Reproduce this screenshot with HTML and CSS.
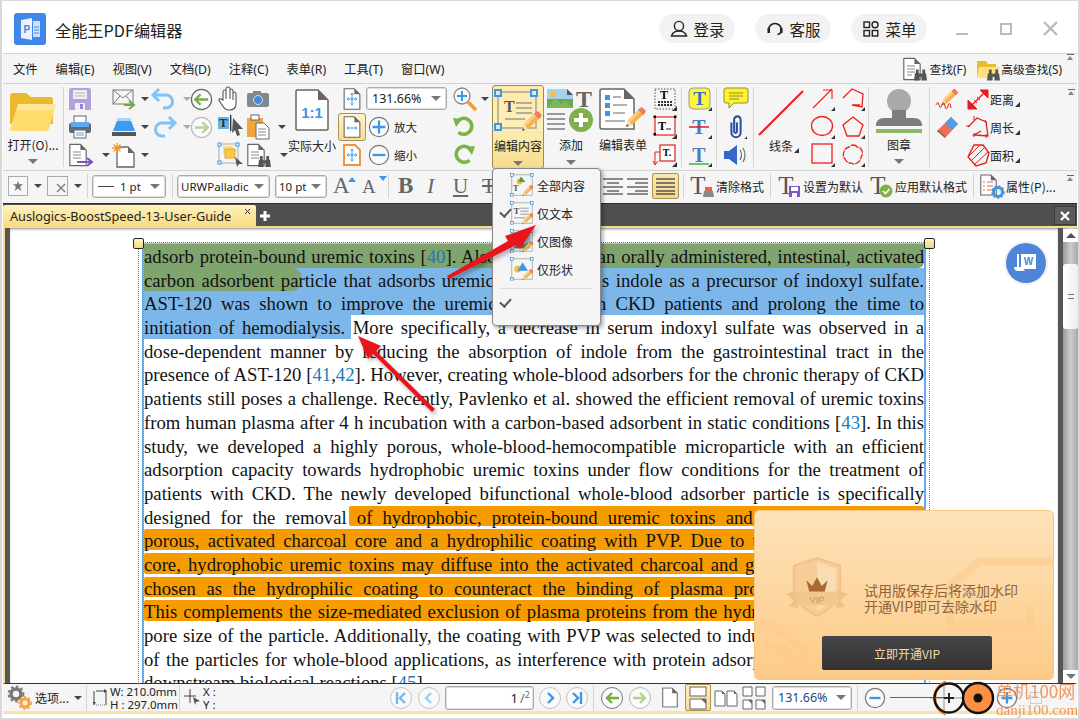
FILE: index.html
```html
<!DOCTYPE html>
<html lang="zh-CN">
<head>
<meta charset="utf-8">
<title>全能王PDF编辑器</title>
<link rel="stylesheet" href="styles.css">
</head>
<body>
<svg class="defs" width="0" height="0">
  <symbol id="pencil" viewBox="0 0 24 24">
    <path d="M3 22l2-7L17 3l5 5L9 20z" fill="#f6b04f"/>
    <path d="M5 15L17 3l2 2L7 17z" fill="#fbd07f"/>
    <path d="M15 5l2-2a2 2 0 0 1 3 0l2 2a2 2 0 0 1 0 3l-2 2z" fill="#ee7d5e"/>
    <path d="M3 22l2-7 4 5z" fill="#f8e3b5"/>
    <path d="M3 22l1-3 2 2z" fill="#555"/>
  </symbol>
  <symbol id="docf" viewBox="0 0 22 28">
    <path d="M1 1h13l7 7v19H1z" fill="#fff" stroke="#666" stroke-width="1.4" stroke-linejoin="round"/>
    <path d="M14 1l7 7h-7z" fill="#666"/>
  </symbol>
  <symbol id="binoc" viewBox="0 0 14 12">
    <path d="M1 4h5v8H0zM8 4h5l1 8H8zM2 0h3v4H2zM9 0h3v4H9zM6 5h2v3H6z" fill="#555"/>
  </symbol>
  <symbol id="handles" viewBox="0 0 40 40">
    <rect x="3" y="3" width="34" height="34" fill="none" stroke="#999" stroke-width="1.2"/>
    <g fill="#fff" stroke="#3d96e6" stroke-width="1.3">
      <rect x="1" y="1" width="4.5" height="4.5"/><rect x="34" y="1" width="4.5" height="4.5"/><rect x="1" y="34" width="4.5" height="4.5"/>
    </g>
  </symbol>
</svg>

<div class="app">
  <header class="title">
    <svg class="logo" width="32" height="32" viewBox="0 0 32 32">
      <rect width="32" height="32" rx="3" fill="#3f87ea"/>
      <path d="M7 7l11-2v22L7 25z" fill="#eaf2fd"/>
      <text x="9.500" y="20" font-family="Liberation Sans" font-weight="700" font-size="10" fill="#3f87ea">P</text>
      <path d="M19 8h7v16h-7z" fill="#cfe0f8"/>
      <path d="M20 14h5M20 17h5M20 20h5" stroke="#3f87ea"/>
    </svg>
    <span class="appname">全能王PDF编辑器</span>
    <div class="pills">
      <a class="pill"><svg width="20" height="20" viewBox="0 0 20 20"><circle cx="10" cy="7" r="4.600" fill="none" stroke="#222" stroke-width="1.400"/><path d="M2.500 17c1-3.500 4-5 7.500-5s6.500 1.500 7.500 5z" fill="none" stroke="#222" stroke-width="1.400"/></svg>登录</a>
      <a class="pill"><svg width="20" height="20" viewBox="0 0 20 20"><path d="M3.500 11a6.500 6.500 0 1 1 13 0c0 2.500-2 4-4 4.500" fill="none" stroke="#222" stroke-width="1.600"/><rect x="2.500" y="9" width="2.500" height="5" fill="#222"/><rect x="15" y="9" width="2.500" height="5" fill="#222"/></svg>客服</a>
      <a class="pill"><svg width="20" height="20" viewBox="0 0 20 20"><g fill="none" stroke="#222" stroke-width="1.400"><rect x="3" y="3" width="5.500" height="5.500"/><circle cx="14" cy="5.800" r="3"/><rect x="3" y="11.500" width="5.500" height="5.500"/><rect x="11.300" y="11.500" width="5.500" height="5.500"/></g></svg>菜单</a>
    </div>
    <div class="winbtns">
      <i class="w-min"></i><i class="w-max"></i>
      <svg width="15" height="15" viewBox="0 0 15 15"><path d="M1 1l13 13M14 1L1 14" stroke="#bbb" stroke-width="2.400"/></svg>
    </div>
  </header>

  <nav class="menubar">
    <a>文件</a><a>编辑(E)</a><a>视图(V)</a><a>文档(D)</a><a>注释(C)</a><a>表单(R)</a><a>工具(T)</a><a>窗口(W)</a>
    <div class="mb-right">
      <svg width="24" height="24" viewBox="0 0 24 24"><use href="#docf" x="0" y="0" width="18" height="24"/><path d="M4 9h8M4 12h8M4 15h8M4 18h5" stroke="#888"/><use href="#binoc" x="11" y="12" width="13" height="12"/></svg>
      <span class="mb-find">查找(F)</span>
      <svg class="mb-ico2" width="24" height="24" viewBox="0 0 24 24"><path d="M1 4h9l2 3h8v14H1z" fill="#e9bd2f"/><path d="M3 10h21l-4 11H1z" fill="#ffdf7e"/><use href="#binoc" x="11" y="12" width="13" height="12"/></svg>
      <span>高级查找(S)</span>
      <b class="coll"></b>
    </div>
  </nav>

  <section class="ribbon">
    <div class="g g-open">
      <svg width="48" height="38" viewBox="0 0 48 38"><path d="M1 3q0-3 3-3h13l5 4h20q2 0 2 3v24H1z" fill="#e9bb2c"/><path d="M9 11h38l-7 25q-1 2-3 2H3q-2 0-2-2z" fill="#ffdc6c"/><path d="M9 11h38l-2 6H8z" fill="#ffe89d"/></svg>
      <span class="lbl lbl-open">打开(O)...</span>
      <i class="car car-g"></i>
    </div>
    <i class="sep"></i>
    <div class="g3 g-file">
      <span class="c"><svg width="22" height="22" viewBox="0 0 22 22"><path d="M0 2q0-2 2-2h18q2 0 2 2v20H0z" fill="#b59fe0"/><rect x="4" y="2" width="14" height="9" fill="#eee"/><path d="M6 5h10M6 8h10" stroke="#bbb"/><rect x="6" y="15" width="10" height="7" fill="#eee"/><rect x="11" y="16" width="3" height="5" fill="#9a82cc"/></svg></span>
      <span class="c"><svg width="24" height="24" viewBox="0 0 24 24"><rect x="1" y="3" width="20" height="14" fill="#f7f7f7" stroke="#777"/><path d="M1 3l10 8 10-8M1 17l7-8M21 17l-7-8" fill="none" stroke="#777"/><path d="M12 18h8M17 14l5 4-5 4" fill="none" stroke="#6eaa3f" stroke-width="2"/></svg><i class="car"></i></span>
      <span class="c"><svg width="24" height="22" viewBox="0 0 24 22"><path d="M7 1L1 7l6 6M2 7h12a6 6 0 0 1 0 13h-3" fill="none" stroke="#83c2f3" stroke-width="3"/></svg><i class="car car-l"></i></span>
      <span class="c"><svg width="23" height="23" viewBox="0 0 24 24"><circle cx="12" cy="12" r="10.500" fill="#fafafa" stroke="#666" stroke-width="1.300"/><path d="M19 12H6M11 6.500L5.500 12l5.500 5.500" fill="none" stroke="#77ad40" stroke-width="2.500"/></svg></span>
      <span class="c"><svg width="22" height="22" viewBox="0 0 22 22"><rect x="5" y="0" width="12" height="7" fill="#fff" stroke="#666"/><rect x="0" y="7" width="22" height="10" rx="2" fill="#5f6a75"/><rect x="2" y="6" width="18" height="5" fill="#5fa8ea"/><rect x="5" y="14" width="12" height="8" fill="#fff" stroke="#666"/><path d="M7 17h8M7 19h8" stroke="#5fa8ea"/></svg></span>
      <span class="c"><svg width="24" height="20" viewBox="0 0 24 20"><path d="M6 1h12l5 13H1z" fill="#3e9bf0"/><path d="M6 1h12l1 3H5z" fill="#a9d5fa"/><rect x="0" y="15" width="24" height="4" fill="#555"/></svg><i class="car"></i></span>
      <span class="c"><svg width="24" height="22" viewBox="0 0 24 22"><path d="M17 1l6 6-6 6M22 7H10a6 6 0 0 0 0 13h3" fill="none" stroke="#83c2f3" stroke-width="3"/></svg><i class="car car-l"></i></span>
      <span class="c"><svg width="23" height="23" viewBox="0 0 24 24"><circle cx="12" cy="12" r="10.500" fill="#fafafa" stroke="#bbb" stroke-width="1.300"/><path d="M5 12h13M13 6.500l5.500 5.500-5.500 5.500" fill="none" stroke="#b5d196" stroke-width="2.500"/></svg></span>
      <span class="c"><svg width="24" height="24" viewBox="0 0 24 24"><use href="#docf" width="18" height="24"/><path d="M4 9h8M4 12h8M4 15h8" stroke="#888"/><path d="M8 19h14M18 15l5 4-5 4" fill="none" stroke="#7b51c5" stroke-width="2"/></svg><i class="car car-s"></i></span>
      <span class="c"><svg width="24" height="24" viewBox="0 0 24 24"><path d="M5 4h11l6 6v14H5z" fill="#fff" stroke="#666" stroke-width="1.300"/><path d="M16 4l6 6h-6z" fill="#666"/><path d="M5 0v10M0 5h10M1.500 1.500l7 7M8.500 1.500l-7 7" stroke="#f09a2c" stroke-width="1.300"/></svg><i class="car"></i></span>
    </div>
    <div class="g3 g-sel">
      <span class="c"><svg width="20" height="24" viewBox="0 0 20 24"><path d="M5 13V5q0-2 1.500-2T8 5v7V2q0-2 2-2t2 2v10V4q0-2 1.500-2T15 4v9V7q0-2 1.500-2T18 7v10q0 6-7 6-4 0-7-5L1 13q0-2 2-1z" fill="#fff" stroke="#555" stroke-width="1.100"/></svg></span>
      <span class="c"><svg width="22" height="16" viewBox="0 0 22 16"><rect y="2" width="22" height="14" rx="2" fill="#808890"/><rect x="6" y="0" width="8" height="3" fill="#808890"/><circle cx="11" cy="9" r="4.500" fill="#3f8fdc" stroke="#ddd"/></svg></span>
      <span class="c"><svg width="26" height="24" viewBox="0 0 26 24"><rect y="2" width="11" height="12" fill="#6cb2ea"/><text x="1" y="12" font-family="Liberation Serif" font-weight="700" font-size="13" fill="#333">T</text><path d="M12 0h1v16h-1" stroke="#666"/><path d="M15 3l10 11h-5l2 6-3 1-2-6-3 3z" fill="#555"/></svg></span>
      <span class="c"><svg width="22" height="24" viewBox="0 0 22 24"><rect y="3" width="16" height="19" fill="#f5a43c"/><rect x="4" y="0" width="8" height="5" fill="#fff" stroke="#666"/><path d="M9 8h8l5 5v11H9z" fill="#fff" stroke="#666"/><path d="M11 14h8M11 17h8M11 20h8" stroke="#888"/></svg><i class="car car-s"></i></span>
      <span class="c"><svg width="26" height="24" viewBox="0 0 26 24"><rect x="1" y="1" width="19" height="19" fill="none" stroke="#aaa"/><rect x="5" y="3" width="10" height="8" fill="#fbdf8a"/><rect x="7" y="6" width="10" height="9" fill="#f9c847" stroke="#e0a82a"/><g fill="#fff" stroke="#3d96e6"><rect width="3" height="3"/><rect x="18" width="3" height="3"/><rect y="18" width="3" height="3"/></g><path d="M17 14l8 7h-4l-2 3z" fill="#555"/></svg></span>
      <span class="c"><svg width="24" height="24" viewBox="0 0 24 24"><use href="#docf" width="18" height="24"/><path d="M4 9h8M4 12h8M4 15h8" stroke="#888"/><use href="#binoc" x="11" y="13" width="13" height="11"/></svg><i class="car car-s"></i></span>
    </div>
    <div class="g g-actual">
      <svg width="34" height="42" viewBox="0 0 34 42"><path d="M2 1h21l10 10v29q0 1-1 1H2q-1 0-1-1V2q0-1 1-1z" fill="#fff" stroke="#666" stroke-width="1.500"/><path d="M23 1l10 10H23z" fill="#666"/><text x="17" y="29" text-anchor="middle" font-family="Liberation Sans" font-weight="700" font-size="15" fill="#3d96e6">1:1</text></svg>
      <span class="lbl lbl-actual">实际大小</span>
    </div>
    <div class="g g-fit">
      <span class="fit"><svg width="18" height="22" viewBox="0 0 18 22"><use href="#docf" width="18" height="22"/><path d="M9 5v12M4 11h10M7.500 6.500L9 5l1.500 1.500M7.500 15.500L9 17l1.500-1.500M5.500 9.500L4 11l1.500 1.500M12.500 9.500L14 11l-1.500 1.500" fill="none" stroke="#3d96e6"/></svg></span>
      <span class="fit fit-on"><svg width="18" height="22" viewBox="0 0 18 22"><use href="#docf" width="18" height="22"/><path d="M4 12h10M5.500 10.500L4 12l1.500 1.500M12.500 10.500L14 12l-1.500 1.500" fill="none" stroke="#3d96e6"/></svg></span>
      <span class="fit"><svg width="18" height="22" viewBox="0 0 18 22"><path d="M1 1h11l5 5v15H1z" fill="#fff" stroke="#f0963a" stroke-width="2"/><path d="M9 5v12M4 11h10M7.500 6.500L9 5l1.500 1.500M7.500 15.500L9 17l1.500-1.500M5.500 9.500L4 11l1.500 1.500M12.500 9.500L14 11l-1.500 1.500" fill="none" stroke="#3d96e6"/></svg></span>
    </div>
    <div class="g g-zoom">
      <div class="combo c-zoom"><span>131.66%</span><i class="car car-g"></i></div>
      <div class="zrow"><svg width="22" height="22" viewBox="0 0 24 24"><circle cx="12" cy="12" r="10.500" fill="#fafafa" stroke="#777" stroke-width="1.300"/><path d="M12 5v14M5 12h14" stroke="#3d96e6" stroke-width="2.500"/></svg><span>放大</span></div>
      <div class="zrow"><svg width="22" height="22" viewBox="0 0 24 24"><circle cx="12" cy="12" r="10.500" fill="#fafafa" stroke="#777" stroke-width="1.300"/><path d="M5 12h14" stroke="#3d96e6" stroke-width="2.500"/></svg><span>缩小</span></div>
    </div>
    <div class="g g-rot">
      <span class="rot"><svg width="24" height="24" viewBox="0 0 24 24"><circle cx="9" cy="9" r="8" fill="#fafafa" stroke="#888" stroke-width="1.300"/><path d="M9 4v10M4 9h10" stroke="#3d96e6" stroke-width="2"/><path d="M15 15l8 8" stroke="#f09a3c" stroke-width="3.500"/></svg><i class="car car-s2"></i></span>
      <span class="rot"><svg width="22" height="20" viewBox="0 0 22 20"><path d="M5 4a8 8 0 1 1-1 9" fill="none" stroke="#7db246" stroke-width="3.500" transform="rotate(-20 11 10)"/><path d="M0 1l9 1-6 8z" fill="#7db246"/></svg></span>
      <span class="rot"><svg width="22" height="20" viewBox="0 0 22 20"><path d="M17 4a8 8 0 1 0 1 9" fill="none" stroke="#7db246" stroke-width="3.500" transform="rotate(20 11 10)"/><path d="M22 1l-9 1 6 8z" fill="#7db246"/></svg></span>
    </div>
    <div class="g bigbtn big-on">
      <span class="big-top"><svg width="48" height="44" viewBox="0 0 48 44"><rect x="4" y="3" width="38" height="36" fill="none" stroke="#999" stroke-width="1.300"/><g fill="#d8e9f8" stroke="#3d96e6" stroke-width="2"><rect x="1" y="1" width="6" height="6"/><rect x="37" y="1" width="6" height="6"/><rect x="1" y="35" width="6" height="6"/></g><text x="10" y="23" font-family="Liberation Serif" font-weight="700" font-size="16" fill="#555">T</text><path d="M22 14h16M22 19h16M22 24h16M11 30h20" stroke="#999" stroke-width="1.500"/><use href="#pencil" x="25" y="20" width="24" height="24"/></svg></span>
      <span class="lbl">编辑内容</span><i class="car car-g"></i>
    </div>
    <div class="g bigbtn big-add">
      <span class="big-top"><svg width="48" height="44" viewBox="0 0 48 44"><path d="M0 1h20l6 6v13H0z" fill="#6fa84c"/><path d="M0 1h20l6 6v4H0z" fill="#a5d1ef"/><path d="M0 20l8-10 6 6 4-3 8 7z" fill="#7db65a"/><circle cx="6" cy="6" r="3" fill="#f3c33f"/><path d="M20 1l6 6h-6z" fill="#555"/><text x="37" y="19" text-anchor="middle" font-family="Liberation Serif" font-weight="700" font-size="24" fill="#666">T</text><path d="M0 26h18M0 31h18M0 36h18M0 41h18" stroke="#999" stroke-width="1.800"/><circle cx="34" cy="32" r="12" fill="#7fb04c"/><path d="M34 25v14M27 32h14" stroke="#fff" stroke-width="4"/></svg></span>
      <span class="lbl">添加</span><i class="car car-g"></i>
    </div>
    <div class="g bigbtn big-form">
      <span class="big-top"><svg width="48" height="44" viewBox="0 0 48 44"><path d="M1 3q0-2 2-2h22l10 10v30H3q-2 0-2-2z" fill="#fff" stroke="#666" stroke-width="1.500"/><path d="M25 1l10 10H25z" fill="#666"/><g fill="#3d96e6"><rect x="6" y="7" width="5" height="5"/><rect x="6" y="15" width="5" height="5"/><rect x="6" y="23" width="5" height="5"/></g><path d="M14 9h8M14 17h14M14 25h12M6 33h20" stroke="#999" stroke-width="1.500"/><use href="#pencil" x="24" y="16" width="24" height="26"/></svg></span>
      <span class="lbl">编辑表单</span>
    </div>
    <div class="g g-txt">
      <svg class="cn" width="24" height="24" viewBox="0 0 24 24"><rect x="2" y="2" width="20" height="20" fill="none" stroke="#555" stroke-dasharray="1.500 1.500"/><text x="11" y="12" text-anchor="middle" font-family="Liberation Serif" font-weight="700" font-size="12">T</text><path d="M5 15h14M5 18h14" stroke="#333" stroke-width="2" stroke-dasharray="2 1"/><path d="M19 24l5-5v5z" fill="#333"/></svg>
      <svg class="cn" width="24" height="24" viewBox="0 0 24 24"><rect x="2" y="2" width="20" height="18" fill="#fff" stroke="#e02020" stroke-width="1.200"/><text x="9" y="15" text-anchor="middle" font-family="Liberation Serif" font-weight="700" font-size="12">T</text><path d="M13 14h5" stroke="#222"/><g fill="#000"><rect x="0.500" y="0.500" width="2.500" height="2.500"/><rect x="21" y="0.500" width="2.500" height="2.500"/><rect x="0.500" y="18" width="2.500" height="2.500"/></g><path d="M19 24l5-5v5z" fill="#333"/></svg>
      <svg class="cn" width="24" height="24" viewBox="0 0 24 24"><rect x="7" y="2" width="15" height="16" fill="#fff" stroke="#e02020" stroke-width="1.200"/><text x="14" y="13" text-anchor="middle" font-family="Liberation Serif" font-weight="700" font-size="10">T.</text><path d="M2 9v12M0 18l2 4 3-4M2 9h5" fill="none" stroke="#e02020"/><path d="M19 24l5-5v5z" fill="#333"/></svg>
    </div>
    <i class="sep"></i>
    <div class="g g-txt2">
      <svg class="cn" width="24" height="24" viewBox="0 0 24 24"><rect x="1" y="1" width="21" height="21" rx="4" fill="#fdf73c" stroke="#999"/><text x="11.500" y="18" text-anchor="middle" font-family="Liberation Serif" font-weight="700" font-size="19" fill="#3d6fc7">T</text><path d="M20 24l4-4v4z" fill="#333"/></svg>
      <svg class="cn" width="24" height="24" viewBox="0 0 24 24"><text x="11" y="19" text-anchor="middle" font-family="Liberation Serif" font-weight="700" font-size="20" fill="#4c7ac6">T</text><path d="M1 12h20" stroke="#e02020" stroke-width="1.500"/><path d="M20 24l4-4v4z" fill="#333"/></svg>
      <svg class="cn" width="24" height="24" viewBox="0 0 24 24"><text x="11" y="19" text-anchor="middle" font-family="Liberation Serif" font-weight="700" font-size="20" fill="#4c7ac6">T</text><path d="M1 21h20" stroke="#3fb33f" stroke-width="1.500"/><path d="M20 24l4-4v4z" fill="#333"/></svg>
    </div>
    <i class="sep"></i>
    <div class="g g-note">
      <svg class="cn" width="26" height="24" viewBox="0 0 26 24"><path d="M3 1h20q2 0 2 2v11q0 2-2 2H11l-5 5v-5H3q-2 0-2-2V3q0-2 2-2z" fill="#fdf335" stroke="#9a8a20"/><path d="M6 6h14M6 9h14M6 12h10" stroke="#8c8c20"/></svg>
      <svg class="cn" width="24" height="24" viewBox="0 0 24 26"><path d="M7 8v11a5 5 0 0 0 10 0V5a3.500 3.500 0 0 0-7 0v13a1.500 1.500 0 0 0 3 0V8" fill="none" stroke="#2c4f9a" stroke-width="2.200"/><path d="M21 26l3-3v3z" fill="#333"/></svg>
      <svg class="cn" width="26" height="24" viewBox="0 0 26 24"><path d="M1 8h5l8-6v20l-8-6H1z" fill="#3466cc"/><path d="M17 7q3 5 0 10M20 5q4 7 0 14" fill="none" stroke="#777" stroke-width="1.300"/></svg>
    </div>
    <i class="sep"></i>
    <div class="g g-line">
      <svg width="46" height="46" viewBox="0 0 46 46"><path d="M1 45L45 1" stroke="#ee1c1c" stroke-width="2"/></svg>
      <span class="lbl lbl-line">线条<b class="tri"></b></span>
    </div>
    <div class="g g-shapes">
      <svg width="24" height="24" viewBox="0 0 24 24"><path d="M2 21L21 2M12 3h9v9" fill="none" stroke="#ee2020" stroke-width="1.100"/><path d="M20 24l4-4v4z" fill="#333"/></svg>
      <svg width="24" height="24" viewBox="0 0 24 24"><path d="M2 11l9-9 11 5-1 13-10-2 8 0" fill="none" stroke="#ee2020" stroke-width="1.300"/><path d="M20 24l4-4v4z" fill="#333"/></svg>
      <svg width="24" height="24" viewBox="0 0 24 24"><ellipse cx="11" cy="11" rx="10.500" ry="9.500" fill="none" stroke="#ee2020" stroke-width="1.300"/><path d="M20 24l4-4v4z" fill="#333"/></svg>
      <svg width="24" height="24" viewBox="0 0 24 24"><path d="M12 2l10 8-4 11H6L2 10z" fill="none" stroke="#ee2020" stroke-width="1.300"/><path d="M20 24l4-4v4z" fill="#333"/></svg>
      <svg width="24" height="24" viewBox="0 0 24 24"><rect x="1" y="1" width="20" height="19" fill="none" stroke="#ee2020" stroke-width="1.300"/><path d="M20 24l4-4v4z" fill="#333"/></svg>
      <svg width="24" height="24" viewBox="0 0 24 24"><path d="M12 2q3 0 4 2 4 0 5 4 1 4-1 6 0 4-4 6-3 2-6 0-4 0-6-4-3-3-1-7 1-4 5-5 2-2 4-2z" fill="none" stroke="#ee2020" stroke-width="1.300" stroke-dasharray="6 1"/><path d="M20 24l4-4v4z" fill="#333"/></svg>
    </div>
    <i class="sep"></i>
    <div class="g g-stamp">
      <svg width="46" height="46" viewBox="0 0 46 46"><circle cx="23" cy="13" r="12" fill="#a9a9a9"/><path d="M16 22h14v8h-14z" fill="#7d7d7d"/><path d="M0 38q0-8 8-8h30q8 0 8 8z" fill="#7d7d7d"/><rect y="41" width="46" height="4" fill="#8fb865"/></svg>
      <span class="lbl lbl-stamp">图章</span><i class="car car-g"></i>
    </div>
    <i class="sep"></i>
    <div class="g g-meas">
      <span class="mrow"><svg width="24" height="24" viewBox="0 0 24 24"><use href="#pencil" x="4" y="0" width="20" height="20"/><path d="M1 18q2-5 3 0t3 0 3 1 3 0 3 2" fill="none" stroke="#e02020"/></svg><svg class="mi" width="24" height="24" viewBox="0 0 24 24"><path d="M3 21L21 3" stroke="#e02020" stroke-width="1.500"/><path d="M14 3h8v8zM2 13v9h9zM8 13l3 3M11 10l3 3" fill="#e02020" stroke="#e02020"/></svg><span class="ml">距离<b class="tri"></b></span></span>
      <span class="mrow"><svg width="24" height="24" viewBox="0 0 24 24"><path d="M2 16L16 2l7 7-13 14z" fill="#ee6e58"/><path d="M10 8l6-6 7 7-6 6z" fill="#4f9fe6"/><path d="M2 16l8 7v-2l-7-6z" fill="#a55"/></svg><svg class="mi" width="24" height="24" viewBox="0 0 24 24"><path d="M2 12l9-9 9 4 2 14-14-1 7-4" fill="none" stroke="#e02020" stroke-width="1.300"/><path d="M8 1v4M19 5l2 4M20 19v4M8 18v4M0 11h4" stroke="#e02020"/></svg><span class="ml">周长<b class="tri"></b></span></span>
      <span class="mrow"><i class="m-sp"></i><svg class="mi" width="24" height="24" viewBox="0 0 24 24"><path d="M8 2h9l6 8-3 10-10 3-8-9z" fill="none" stroke="#e02020" stroke-width="1.400"/><path d="M3 13L14 2M5 18L19 4M9 21L22 9" stroke="#e02020"/></svg><span class="ml">面积<b class="tri"></b></span></span>
    </div>
    <b class="coll coll-r"></b>
  </section>

  <section class="fmt">
    <span class="box m0"><svg width="10" height="10" viewBox="0 0 12 12"><path d="M6 0l1.500 4 4.500 0-3.500 3 1.500 5L6 9l-4 3 1.500-5L0 4h4.500z" fill="#777"/></svg></span>
    <i class="car m6"></i>
    <span class="box box2 m5"><svg width="10" height="10" viewBox="0 0 10 10"><path d="M1 1l8 8M9 1L1 9" stroke="#777" stroke-width="1.300"/></svg></span>
    <i class="car m6"></i>
    <i class="vs m5"></i>
    <div class="combo c-pt m4"><span class="dash"></span><span>1 pt</span><i class="car car-g"></i></div>
    <i class="vs m6"></i>
    <div class="combo c-font m4"><span>URWPalladic</span><i class="car car-g"></i></div>
    <div class="combo c-size m5"><span>10 pt</span><i class="car car-g"></i></div>
    <span class="glyph bigA m6">A<b class="up"></b></span>
    <span class="glyph smallA m9">A<b class="dn"></b></span>
    <i class="vs m4"></i>
    <span class="glyph fb m9">B</span>
    <span class="glyph fi m12">I</span>
    <span class="glyph fu m13">U</span>
    <span class="glyph fs m12">T</span>
    <svg class="m103" width="20" height="20" viewBox="0 0 20 20"><path d="M0 3h20M4 7h12M0 11h20M4 15h12M0 18h20" stroke="#666" stroke-width="1.500"/></svg>
    <svg class="m4" width="21" height="20" viewBox="0 0 21 20"><path d="M0 3h21M8 7h13M0 11h21M8 15h13M0 18h21" stroke="#666" stroke-width="1.500"/></svg>
    <span class="just m4"><svg width="19" height="20" viewBox="0 0 19 20"><path d="M0 3h19M0 7h19M0 11h19M0 15h19M0 18h19" stroke="#555" stroke-width="1.700"/></svg></span>
    <i class="vs m4"></i>
    <svg class="m6" width="23" height="24" viewBox="0 0 23 24"><text x="8" y="20" text-anchor="middle" font-family="Liberation Serif" font-size="25" fill="#555">T</text><rect x="15" y="13" width="7" height="4" fill="#dd6b4a"/><path d="M14 17h9l1 6h-11z" fill="#888"/></svg>
    <span class="ft m3">清除格式</span>
    <i class="vs m6"></i>
    <svg class="m7" width="23" height="24" viewBox="0 0 23 24"><text x="8" y="20" text-anchor="middle" font-family="Liberation Serif" font-size="25" fill="#555">T</text><path d="M11 12h11v11H11z" fill="#7b5ac5"/><rect x="13" y="13" width="7" height="4" fill="#fff"/><rect x="14" y="19" width="5" height="4" fill="#fff"/></svg>
    <span class="ft m2">设置为默认</span>
    <svg class="m7" width="23" height="24" viewBox="0 0 23 24"><text x="8" y="20" text-anchor="middle" font-family="Liberation Serif" font-size="25" fill="#555">T</text><circle cx="16" cy="17" r="6.500" fill="#7fb04c"/><path d="M13 17l2.500 2.500 4-4.500" fill="none" stroke="#fff" stroke-width="1.600"/></svg>
    <span class="ft m2">应用默认格式</span>
    <i class="vs m6"></i>
    <svg class="m6" width="24" height="24" viewBox="0 0 24 24"><use href="#docf" width="17" height="22"/><path d="M3 8h2M7 8h6M3 12h2M7 12h6M3 16h2M7 16h6" stroke="#e56a4a"/><circle cx="18" cy="18" r="4.500" fill="none" stroke="#3d96e6" stroke-width="3"/><circle cx="18" cy="18" r="6" fill="none" stroke="#3d96e6" stroke-width="1.500" stroke-dasharray="2 2"/></svg>
    <span class="ft m2">属性(P)...</span>
    <b class="coll coll-f"></b>
  </section>

  <div class="tabs">
    <div class="tab"><span>Auslogics-BoostSpeed-13-User-Guide</span><svg width="7" height="7" viewBox="0 0 7 7"><path d="M1 1l5 5M6 1L1 6" stroke="#333"/></svg></div>
    <svg class="tab-add" width="10" height="10" viewBox="0 0 10 10"><path d="M5 0v10M0 5h10" stroke="#fff" stroke-width="3"/></svg>
    <div class="tab-close"><svg width="10" height="10" viewBox="0 0 10 10"><path d="M1 1l8 8M9 1L1 9" stroke="#fff" stroke-width="2.400"/></svg></div>
  </div>

  <main class="doc">
    <div class="view">
      <div class="page">
        <b class="hd hd-l"></b><b class="hd hd-r"></b>
        <article class="text">
          <p class="ln"><i class="hl hl-g1"></i>adsorb protein-bound uremic toxins [<a>40</a>]. Also, AST-120 is an orally administered, intestinal, activated</p>
          <p class="ln"><i class="hl hl-b2"></i><i class="hl hl-g2"></i>carbon adsorbent particle that adsorbs uremic toxins such as indole as a precursor of indoxyl sulfate.</p>
          <p class="ln"><i class="hl hl-b"></i>AST-120 was shown to improve the uremic symptoms in CKD patients and prolong the time to</p>
          <p class="ln"><i class="hl hl-b4"></i>initiation of hemodialysis. More specifically, a decrease in serum indoxyl sulfate was observed in a</p>
          <p class="ln">dose-dependent manner by reducing the absorption of indole from the gastrointestinal tract in the</p>
          <p class="ln">presence of AST-120 [<a>41</a>,<a>42</a>]. However, creating whole-blood adsorbers for the chronic therapy of CKD</p>
          <p class="ln">patients still poses a challenge. Recently, Pavlenko et al. showed the efficient removal of uremic toxins</p>
          <p class="ln">from human plasma after 4 h incubation with a carbon-based adsorbent in static conditions [<a>43</a>]. In this</p>
          <p class="ln">study, we developed a highly porous, whole-blood-hemocompatible microparticle with an efficient</p>
          <p class="ln">adsorption capacity towards hydrophobic uremic toxins under flow conditions for the treatment of</p>
          <p class="ln">patients with CKD. The newly developed bifunctional whole-blood adsorber particle is specifically</p>
          <p class="ln"><i class="hl hl-o1"></i>designed for the removal of hydrophobic, protein-bound uremic toxins and consists of a highly</p>
          <p class="ln"><i class="hl hl-o"></i>porous, activated charcoal core and a hydrophilic coating with PVP. Due to the large pores of the</p>
          <p class="ln"><i class="hl hl-o"></i>core, hydrophobic uremic toxins may diffuse into the activated charcoal and get adsorbed. PVP was</p>
          <p class="ln"><i class="hl hl-o"></i>chosen as the hydrophilic coating to counteract the binding of plasma proteins to the particle.</p>
          <p class="ln"><i class="hl hl-o"></i>This complements the size-mediated exclusion of plasma proteins from the hydrophilic coating by the</p>
          <p class="ln">pore size of the particle. Additionally, the coating with PVP was selected to induce hemocompatibility</p>
          <p class="ln">of the particles for whole-blood applications, as interference with protein adsorption prevents adverse</p>
          <p class="ln ln-end">downstream biological reactions [<a>45</a>].</p>
        </article>
      </div>
    </div>
    <div class="sbar">
      <span class="sb-btn"><i class="car-up"></i></span>
      <span class="sb-thumb"><i></i></span>
      <span class="sb-btn sb-dn"><i class="car car-g"></i></span>
    </div>
  </main>

  <footer class="status">
    <svg class="m0" width="24" height="26" viewBox="0 0 24 26"><circle cx="8" cy="9" r="5" fill="none" stroke="#777" stroke-width="3.500"/><circle cx="8" cy="9" r="7.500" fill="none" stroke="#777" stroke-width="1.800" stroke-dasharray="2.500 2.500"/><circle cx="17" cy="18" r="4" fill="none" stroke="#f5a53c" stroke-width="3"/><circle cx="17" cy="18" r="6" fill="none" stroke="#f5a53c" stroke-width="1.800" stroke-dasharray="2.200 2.200"/></svg>
    <span class="st m3">选项...</span>
    <i class="car m6"></i>
    <i class="vs vs-st m4"></i>
    <svg class="m6" width="15" height="18" viewBox="0 0 15 18"><path d="M1 2v14M3 2h10v14" fill="none" stroke="#444"/><path d="M3 16h10" stroke="#777" stroke-dasharray="1 1"/><path d="M11 0l3 2-3 2zM0 13l1 3 2-3z" fill="#444"/></svg>
    <div class="dim m2"><span>W: 210.0mm</span><span>H : 297.0mm</span></div>
    <i class="vs vs-st m3"></i>
    <svg class="m4" width="17" height="17" viewBox="0 0 17 17"><path d="M0 7h12M6 0v14" stroke="#444"/><path d="M9 8l7 4-4 1-1 3z" fill="#555"/></svg>
    <div class="dim dim-xy m2"><span>X :</span><span>Y :</span></div>
    <button class="nav m147"><svg width="12" height="12" viewBox="0 0 12 12"><path d="M2 0v12" stroke="#73b8ee" stroke-width="2.400"/><path d="M10 1L5 6l5 5" fill="none" stroke="#73b8ee" stroke-width="2.400"/></svg></button>
    <button class="nav m6"><svg width="12" height="12" viewBox="0 0 12 12"><path d="M8 1L3 6l5 5" fill="none" stroke="#9ccdf3" stroke-width="2.400"/></svg></button>
    <div class="pageno m5"><span class="p1">1</span><span class="p2">/<sup>2</sup></span></div>
    <button class="nav m5"><svg width="12" height="12" viewBox="0 0 12 12"><path d="M4 1l5 5-5 5" fill="none" stroke="#3d96e6" stroke-width="2.400"/></svg></button>
    <button class="nav m5"><svg width="12" height="12" viewBox="0 0 12 12"><path d="M10 0v12" stroke="#3d96e6" stroke-width="2.400"/><path d="M2 1l5 5-5 5" fill="none" stroke="#3d96e6" stroke-width="2.400"/></svg></button>
    <i class="vs vs-st m5"></i>
    <button class="nav nav2 m7"><svg width="16" height="14" viewBox="0 0 16 14"><path d="M15 7H3M8 2L3 7l5 5" fill="none" stroke="#77ad40" stroke-width="2.400"/></svg></button>
    <button class="nav nav2 m6 off"><svg width="16" height="14" viewBox="0 0 16 14"><path d="M1 7h12M8 2l5 5-5 5" fill="none" stroke="#b5d196" stroke-width="2.400"/></svg></button>
    <svg class="m11" width="16" height="21" viewBox="0 0 22 28"><use href="#docf" width="22" height="28"/></svg>
    <span class="pgsel m7"><svg width="18" height="24" viewBox="0 0 18 24"><rect x="1" y="1" width="16" height="9" fill="#fff" stroke="#666"/><path d="M1 13h16v10H1z" fill="#fff" stroke="#666"/><path d="M12 13l5 5v-5z" fill="#666"/></svg></span>
    <svg class="m3" width="24" height="18" viewBox="0 0 24 18"><path d="M1 2h7l3 3v12H1zM13 2h7l3 3v12H13z" fill="#fff" stroke="#666"/><path d="M8 2l3 3H8zM20 2l3 3h-3z" fill="#666"/></svg>
    <svg class="m4" width="24" height="24" viewBox="0 0 24 24"><path d="M1 1h9v9H1zM14 1h9v9h-9zM1 14h9v9H1zM14 14h9v9h-9z" fill="#fff" stroke="#666"/><path d="M6 14l4 4v-4zM19 14l4 4v-4z" fill="#666"/></svg>
    <div class="combo c-sz2 m6"><span>131.66%</span><i class="car car-g"></i></div>
    <i class="vs vs-st m5"></i>
    <svg class="m6" width="22" height="22" viewBox="0 0 24 24"><circle cx="12" cy="12" r="10.500" fill="#fafafa" stroke="#777" stroke-width="1.300"/><path d="M6 12h12" stroke="#3d96e6" stroke-width="2.500"/></svg>
    <i class="slider"></i>
    <span class="zp"><svg width="22" height="22" viewBox="0 0 24 24"><circle cx="12" cy="12" r="10.500" fill="#fafafa" stroke="#777" stroke-width="1.300"/><path d="M12 6v12M6 12h12" stroke="#3d96e6" stroke-width="2.500"/></svg></span>
    <i class="zfit"></i>
  </footer>

  <div class="ctxmenu">
    <div class="mi-row"><i class="chk"></i><svg width="24" height="24" viewBox="0 0 40 40"><use href="#handles"/><circle cx="16" cy="14" r="5" fill="#f3c33f"/><path d="M18 6l8 9H14z" fill="#5b9a4c"/><text x="5" y="30" font-family="Liberation Serif" font-weight="700" font-size="14" fill="#555">T</text><use href="#pencil" x="18" y="18" width="22" height="22"/></svg><span>全部内容</span></div>
    <div class="mi-row"><i class="chk on"></i><svg width="24" height="24" viewBox="0 0 40 40"><use href="#handles"/><text x="6" y="22" font-family="Liberation Serif" font-weight="700" font-size="15" fill="#555">T</text><path d="M17 12h14M17 17h14M17 22h14M7 28h18" stroke="#999" stroke-width="1.600"/><use href="#pencil" x="18" y="18" width="22" height="22"/></svg><span>仅文本</span></div>
    <div class="mi-row"><i class="chk"></i><svg width="24" height="24" viewBox="0 0 40 40"><use href="#handles"/><path d="M6 8h28v24H6z" fill="#a5d1ef"/><path d="M6 32l10-14 8 8 5-4 5 10z" fill="#5f9a48"/><use href="#pencil" x="18" y="18" width="22" height="22"/></svg><span>仅图像</span></div>
    <div class="mi-row"><i class="chk"></i><svg width="24" height="24" viewBox="0 0 40 40"><use href="#handles"/><circle cx="13" cy="20" r="6" fill="#f3c33f"/><path d="M21 9l9 14H12z" fill="#3d96e6"/><use href="#pencil" x="18" y="18" width="22" height="22"/></svg><span>仅形状</span></div>
    <hr class="mi-sep">
    <div class="mi-row mi-last"><i class="chk on"></i></div>
  </div>

  <svg class="arrows" width="1080" height="720" viewBox="0 0 1080 720">
    <defs><filter id="sh"><feDropShadow dx="2" dy="3" stdDeviation="2" flood-color="#000" flood-opacity=".3"/></filter></defs>
    <g fill="#e8141c" filter="url(#sh)">
      <path d="M447 276L508 241 505 236 536 225 520 249 516 245 449 279Z"/>
      <path d="M432 412L373 354 368 359 358 336 381 346 376 351 435 409Z"/>
    </g>
  </svg>

  <div class="lw"><svg width="24" height="22" viewBox="0 0 24 22"><rect x="7" y="2" width="15" height="15" fill="#fff"/><path d="M3 2v13H0q0 4 4 4h7q-2-2-2-4H5V2z" fill="#fff"/><text x="14.500" y="13" text-anchor="middle" font-family="Liberation Sans" font-weight="700" font-size="10" fill="#4d86d8">W</text></svg></div>

  <aside class="vip">
    <svg class="vip-deco" width="300" height="170" viewBox="0 0 300 170"><path d="M0 115h20l28 24v31M10 135h14l10 8v27M195 115v-40l30-25h75M195 115h80V95" fill="none" stroke="#fdc98a" stroke-opacity=".5" stroke-width="8"/></svg>
    <div class="vip-main">
      <svg class="vip-badge" width="62" height="58" viewBox="0 0 64 60"><path d="M32 0l24 8v26q0 14-24 26Q8 48 8 34V8z" fill="#f6cd97" stroke="#f2c088" stroke-width="2"/><path d="M32 4l20 7v23q0 11-20 21z" fill="#f8dcb2"/><path d="M21 23l6 6 5-9 5 9 6-6-3 12H24z" fill="#a86a30"/><path d="M0 37l12-3v18L3 50l5-6zM64 37l-12-3v18l9-2-5-6z" fill="#efc08a"/><path d="M10 35h44v14H10z" fill="#f3c690"/><text x="32" y="47" text-anchor="middle" font-family="Liberation Sans" font-size="10" fill="#c99a68">VIP</text></svg>
      <p class="vip-text">试用版保存后将添加水印<br>开通VIP即可去除水印</p>
    </div>
    <button class="vip-btn">立即开通VIP</button>
  </aside>

  <svg class="cursorfx" width="66" height="40" viewBox="0 0 66 40">
    <path d="M16 4a17 17 0 0 0 0 32" fill="none" stroke="#f07820" stroke-width="3"/>
    <circle cx="19" cy="20" r="14.500" fill="none" stroke="#111" stroke-width="2.400"/>
    <path d="M19 15v10M14 20h10" stroke="#111" stroke-width="1.800"/>
    <path d="M0 20h36M14 6v28" stroke="#555" stroke-width=".6"/>
    <circle cx="48" cy="20" r="15" fill="#fb8f43" stroke="#111" stroke-width="2.400"/>
    <circle cx="48" cy="20" r="4.500" fill="#111"/>
  </svg>
  <div class="wm"><span class="wm1">单机100网</span><span class="wm2">danji100.com</span></div>
</div>
</body>
</html>
```
FILE: styles.css
```css
* { box-sizing: border-box; }
html, body { margin: 0; padding: 0; }
body { width: 1080px; height: 720px; overflow: hidden; background: #fff;
  font-family: "Noto Sans", "Noto Sans CJK SC", sans-serif; color: #222; }
.defs { position: absolute; }
svg { display: block; flex: none; overflow: visible; }
i, b { display: block; flex: none; }

.app { position: relative; width: 1080px; height: 720px; display: flex; flex-direction: column;
  border: 1px solid #d8d8d8; border-width: 1px 2px 2px; overflow: hidden; }

/* title */
.title { height: 52px; flex: none; display: flex; align-items: center; padding-left: 12px; background: #fff; }
.logo { margin-top: 3px; }
.appname { margin-left: 9px; font: 16.2px "Noto Sans CJK SC", sans-serif; margin-top: 5px; color: #222; width: 128px; white-space: nowrap; }
.pills { display: flex; gap: 20px; margin-left: 476px; margin-top: 3px; }
.pill { width: 76px; height: 29px; border-radius: 15px; background: #f2f2f2; display: flex; align-items: center;
  justify-content: center; gap: 4px; font: 15.5px "Noto Sans CJK SC", sans-serif; color: #222; }
.winbtns { display: flex; align-items: center; margin-left: 29px; margin-top: 3px; }
.w-min { width: 12px; height: 2px; background: #bbb; margin-top: 10px; }
.w-max { width: 12px; height: 12px; border: 2px solid #bbb; margin-left: 32px; }
.winbtns svg { margin-left: 31px; }

/* menu */
.menubar { height: 31px; flex: none; margin: 0 1px; display: flex; align-items: center; gap: 18px; padding-left: 10px;
  background: #f5f5f5; border-top: 1px solid #d4d4d4; border-bottom: 1px solid #d4d4d4; font-size: 12.3px; }
.menubar a { white-space: nowrap; }
.mb-right { margin-left: auto; display: flex; align-items: center; padding-right: 3px; font-size: 11.8px; }
.mb-find { margin-left: 2px; }
.mb-ico2 { margin: 0 1px 0 10px; }
.coll { width: 7px; height: 5px; margin-left: 5px; border-top: 1px solid #666; position: relative; }
.coll::after { content: ""; position: absolute; left: 0; top: 1px; border: 3.500px solid transparent; border-bottom: 4px solid #888; border-top: 0; }
.mb-right .coll { align-self: flex-start; margin-top: -3px; }

/* ribbon */
.ribbon { height: 87px; flex: none; margin: 0 1px; display: flex; background: #f5f5f5; border-bottom: 1px solid #d4d4d4; padding-top: 1px; font-size: 12px; position: relative; }
.sep { width: 1px; height: 80px; background: #d6d6d6; margin-top: 2px; }
.g { display: flex; flex-direction: column; align-items: center; flex: none; }
.lbl { font: 12px/16px "Noto Sans CJK SC", sans-serif; white-space: nowrap; color: #222; }
.car { width: 0; height: 0; border-style: solid; border-width: 4px 4px 0; border-color: #444 transparent transparent; }
.car-g { border-width: 5px 5px 0; border-top-color: #777; }
.car-l { border-top-color: #aaa; margin-left: 2px; }
.car-s { margin-left: 4px; }
.car-s2 { margin-left: 4px; }
.g-open { width: 60px; padding-top: 8px; }
.lbl-open { margin-top: 6px; margin-bottom: 6px; }
.g3 { display: grid; grid-template-rows: repeat(3, 28px); grid-auto-flow: row; flex: none; align-items: center; }
.c { display: flex; align-items: center; gap: 5px; }
.g-file { width: 151px; grid-template-columns: 43px 40px 38px 30px; padding-left: 5px; }
.g-sel { width: 72px; grid-template-columns: 29px 41px; padding-left: 3px; }
.g-actual { width: 50px; padding-top: 4px; }
.lbl-actual { margin-top: 7px; }
.g-fit { width: 29px; }
.fit { height: 28px; display: flex; align-items: center; justify-content: center; width: 28px; margin-left: 1px; }
.fit-on { background: linear-gradient(#fff3c4, #f8dd94); border: 1px solid #a8935a; border-radius: 3px; }
.g-zoom { width: 87px; align-items: flex-start; }
.combo { display: flex; align-items: center; justify-content: space-between; height: 23px; background: #fff; border: 1px solid #aaa; border-radius: 3px;
  box-shadow: 0 0 0 1px #ddd inset; padding: 0 5px; font-size: 12.5px; white-space: nowrap; flex: none; }
.c-zoom { width: 81px; margin-top: 2px; margin-bottom: 3px; }
.zrow { height: 28px; display: flex; align-items: center; gap: 4px; padding-left: 2px; font: 11.5px "Noto Sans CJK SC", sans-serif; }
.g-rot { width: 39px; align-items: flex-start; }
.rot { height: 28px; display: flex; align-items: center; }
.bigbtn { height: 84px; width: 52px; padding-top: 3px; }
.big-on { background: linear-gradient(#ffe9a8, #fdf0b6 45%, #f5dc8f); border: 1px solid #9c8c50; border-radius: 3px; width: 52px; }
.big-add { margin-left: 3px; width: 48px; }
.big-form { margin-left: 2px; width: 52px; }
.big-top { height: 44px; display: block; flex: none; }
.bigbtn .lbl { margin-top: 5px; margin-bottom: 7px; }
.big-on .big-top { border-bottom: 1px solid #f3e3ac; width: 50px; padding-left: 1px; }
.g-txt { width: 32px; }
.cn { margin: 2px 0 2px; }
.g-txt2 { width: 34px; padding-left: 2px; }
.g-note { width: 36px; padding-left: 2px; }
.g-line { width: 54px; padding-top: 5px; }
.lbl-line { margin-top: 2px; margin-left: 6px; display: flex; align-items: flex-end; }
.tri { width: 0; height: 0; border-style: solid; border-width: 0 0 5px 5px; border-color: transparent transparent #333 transparent; margin-left: 1px; margin-bottom: 1px; }
.g-shapes { width: 60px; display: grid; grid-template-columns: 30px 30px; grid-template-rows: repeat(3, 28px); align-items: center; justify-items: center; }
.g-stamp { width: 60px; padding-top: 3px; }
.lbl-stamp { margin-top: 3px; margin-bottom: 6px; }
.g-meas { width: 130px; align-items: flex-start; padding-left: 5px; }
.mrow { height: 28px; display: flex; align-items: center; }
.mi { margin-left: 7px; }
.ml { margin-left: 0; display: flex; align-items: flex-end; font: 12px "Noto Sans CJK SC", sans-serif; }
.m-sp { width: 24px; }
.coll-r { position: absolute; right: 2px; top: 5px; margin: 0; }
.coll-f { position: absolute; right: 3px; top: 4px; margin: 0; }

/* format row */
.fmt { height: 32px; flex: none; margin: 0 1px; display: flex; align-items: center; padding: 0 0 2px 5px; background: #f5f5f5; position: relative; }
.box { width: 20px; height: 20px; border: 1px solid #aaa; background: #f8f8f8; display: flex; align-items: center; justify-content: center; }
.box2 { width: 21px; background: transparent; justify-content: flex-end; align-items: flex-end; padding: 2px 1px; }
.vs { width: 1px; height: 24px; background: #d4d4d4; }
.m0 { margin-left: 0; } .m2 { margin-left: 2px; } .m3 { margin-left: 3px; } .m4 { margin-left: 4px; } .m5 { margin-left: 5px; } .m6 { margin-left: 6px; }
.m7 { margin-left: 7px; } .m9 { margin-left: 9px; } .m11 { margin-left: 11px; } .m12 { margin-left: 12px; } .m13 { margin-left: 13px; } .m103 { margin-left: 103px; } .m147 { margin-left: 147px; }
.c-pt { width: 74px; justify-content: flex-start; }
.dash { width: 16px; height: 1px; background: #444; margin-right: 6px; }
.c-pt .car { margin-left: auto; }
.c-pt, .c-font, .c-size { font-size: 11.5px; }
.c-font { width: 93px; padding-left: 3px; }
.c-size { width: 52px; padding-left: 3px; }
.glyph { font-family: "Liberation Serif", serif; color: #666; position: relative; display: block; line-height: 24px; flex: none; }
.bigA { width: 20px; font-size: 23px; }
.smallA { width: 22px; font-size: 19px; padding-top: 2px; }
.up, .dn { position: absolute; right: -3px; top: 3px; width: 0; height: 0; border-style: solid; border-color: transparent; }
.up { border-width: 0 4px 5px; border-bottom-color: #3d96e6; }
.dn { border-width: 5px 4px 0; border-top-color: #3d96e6; }
.fb { width: 17px; font-weight: 700; font-size: 23px; }
.fi { width: 13px; font-style: italic; font-size: 22px; }
.fu { width: 17px; font-size: 21px; text-decoration: underline; }
.fs { width: 18px; font-size: 22px; text-decoration: line-through; }
.just { width: 27px; height: 26px; background: linear-gradient(#fbe7a8, #f5d98a); border: 1px solid #a8935a; border-radius: 2px; display: flex; align-items: center; justify-content: center; }
.ft { font: 12px "Noto Sans CJK SC", sans-serif; white-space: nowrap; display: block; }

/* tabs */
.tabs { height: 25px; flex: none; margin: 0 1px; position: relative; display: flex; align-items: flex-end; background: #4f4f4f; border-top: 1px solid #2e2e2e; border-bottom: 2px solid #f7dc8c; }
.tab { width: 253px; height: 22px; margin-bottom: -1px; background: linear-gradient(#fff2be, #f8d97f); border-radius: 2px 2px 0 0; display: flex; align-items: center; padding-left: 7px; font-size: 12.7px; color: #222; white-space: nowrap; position: relative; }
.tab svg { position: absolute; right: 5px; top: 3px; }
.tab-add { margin: 0 0 5px 4px; }
.tab-close { position: absolute; right: 1px; top: 2px; width: 22px; height: 19px; border: 1px solid #3c3c3c; background: #5c5c5c; display: flex; align-items: center; justify-content: center; }

/* document */
.doc { height: 456px; flex: none; margin: 0 1px; display: flex; border-left: 2px solid #f7dc8c; border-right: 2px solid #f7dc8c; background: #555; border-bottom: 1px solid #333; }
.view { width: 1048px; margin-left: 5px; background: #fff; padding: 14px 0 0 128px; overflow: hidden; box-shadow: 0 2px 3px -1px #888 inset; flex: none; }
.page { position: relative; isolation: isolate; width: 792px; border: 1px dotted #777; border-bottom: 0; padding: 0 3px; height: 460px; }
.hd { position: absolute; top: -5px; width: 11px; height: 11px; background: linear-gradient(#fff4c4, #f6d67c); border: 1px solid #222; border-radius: 2px; }
.hd-l { left: -6px; } .hd-r { right: -6px; }
.text { border: 0 solid #6aa9ec; border-width: 1px 2px 0; border-top-color: #e0c050; width: 784px; font: 18.7px "Liberation Serif", serif; color: #111; }
.ln { margin: 0; position: relative; height: 23.7px; line-height: 25.7px; white-space: nowrap; text-align: justify; text-align-last: justify; }
.ln-end { text-align-last: left; }
.ln a { color: #1e78b8; position: relative; }
.hl { position: absolute; z-index: -1; top: 0; bottom: 0; left: 0; right: 0; }
.hl-g1 { background: #80a46d; border-radius: 0 0 6px 0; }
.hl-g2 { right: auto; width: 158px; background: #80a46d; border-radius: 0 10px 10px 0; }
.hl-b2, .hl-b { background: #7db7e9; }
.hl-b4 { background: #7db7e9; right: auto; width: 207px; }
.hl-o { background: #f69b00; top: 1px; bottom: 2px; border-radius: 2px; }
.hl-o1 { background: #f69b00; top: 1px; bottom: 2px; left: 205px; border-radius: 2px; }

/* scrollbar */
.sbar { width: 15px; margin-left: 5px; flex: none; display: flex; flex-direction: column; background: linear-gradient(90deg, #999, #ccc 50%, #aaa); padding-top: 1px; }
.sb-btn { height: 13px; background: #fff; display: flex; align-items: center; justify-content: center; flex: none; }
.car-up { width: 0; height: 0; border-style: solid; border-width: 0 5px 5px; border-color: transparent transparent #555; }
.sb-thumb { height: 65px; margin-top: 22px; background: linear-gradient(90deg, #fff, #eee); border-radius: 3px; display: flex; align-items: center; justify-content: center; flex: none; }
.sb-thumb i { width: 6px; height: 5px; border-top: 1px solid #777; border-bottom: 1px solid #777; position: relative; }
.sb-dn { margin-top: auto; }

/* status */
.status { height: 30px; flex: none; margin: 0 1px; display: flex; align-items: center; padding-left: 5px; background: #f5f5f5; border-bottom: 3px solid #fbe4a2; position: relative; }
.st { font: 12px "Noto Sans CJK SC", sans-serif; white-space: nowrap; display: block; width: 33px; }
.vs-st { height: 26px; }
.dim { display: flex; flex-direction: column; font-size: 11.4px; line-height: 13px; white-space: nowrap; width: 66px; }
.dim-xy { width: 40px; }
.nav { width: 22px; height: 22px; padding: 0; border-radius: 50%; border: 1px solid #c4c4c4; background: #fafafa; display: flex; align-items: center; justify-content: center; flex: none; }
.nav2 { border-color: #777; }
.nav2.off { border-color: #bbb; }
.pageno { width: 89px; height: 24px; border: 1px solid #aaa; border-radius: 3px; background: #fff; box-shadow: 0 0 0 1px #ddd inset; display: flex; align-items: center; justify-content: flex-end; padding-right: 3px; font-size: 13px; flex: none; }
.p2 { color: #666; font-size: 13px; margin-left: 2px; }
.p2 sup { font-size: 9px; }
.pgsel { width: 26px; height: 27px; background: linear-gradient(#fff1bd, #f7d98b); border: 1px solid #a8935a; border-radius: 2px; display: flex; align-items: center; justify-content: center; flex: none; }
.c-sz2 { width: 80px; height: 24px; font-size: 12.5px; color: #1c4a80; }
.slider { width: 58px; height: 1px; background: #666; margin-left: 4px; flex: none; }
.zp { margin-left: 48px; }
.zfit { width: 12px; height: 12px; margin-left: 12px; border: 1px solid #ccc; flex: none; }

/* overlays */
.ctxmenu { position: absolute; left: 490px; top: 167px; width: 109px; height: 158px; z-index: 5; padding: 2px 0 0; background: #f5f5f5; border: 1px solid #888; border-radius: 4px; box-shadow: 2px 2px 4px rgba(0,0,0,.35); font: 12px "Noto Sans CJK SC", sans-serif; }
.mi-row { height: 28px; display: flex; align-items: center; }
.mi-row svg { margin-left: 1px; }
.mi-row span { margin-left: 3px; }
.chk { width: 10px; height: 10px; margin-left: 6px; position: relative; flex: none; }
.chk.on::after { content: ""; position: absolute; left: 1px; top: 0; width: 9px; height: 5px; border-left: 2.500px solid #555; border-bottom: 2.500px solid #555; transform: rotate(-48deg); }
.mi-sep { border: 0; height: 1px; background: #ddd; margin: 5px 7px 0; }
.mi-last { height: 28px; }
.arrows { position: absolute; left: -2px; top: -1px; z-index: 6; pointer-events: none; }
.lw { position: absolute; left: 1004px; top: 242px; width: 40px; height: 40px; border-radius: 50%; background: #4d86d8; box-shadow: 0 0 0 2px #f2f2f2; display: flex; align-items: center; justify-content: center; z-index: 3; }
.vip { position: absolute; left: 752px; top: 509px; width: 300px; height: 170px; z-index: 4; background: linear-gradient(#fde2b8, #fdcb88); border: 1px solid #f9c784; border-radius: 5px; overflow: hidden; }
.vip-deco { position: absolute; left: 0; top: 0; }
.vip-main { position: relative; display: flex; align-items: flex-end; padding: 47px 0 0 31px; }
.vip-text { margin: 0 0 2px 16px; font: 14px/16px "Noto Sans CJK SC", sans-serif; color: #8f6240; white-space: nowrap; }
.vip-btn { position: relative; display: block; width: 170px; height: 34px; margin: 20px 0 0 67px; border: 0; border-radius: 2px; background: linear-gradient(#464646, #333); color: #f7d9a8; font: 12px "Noto Sans CJK SC", sans-serif; padding: 0; }
.cursorfx { position: absolute; left: 928px; top: 677px; z-index: 7; }
.wm { position: absolute; right: 0; top: 679px; width: 82px; z-index: 8; display: flex; flex-direction: column; align-items: flex-start; color: #ef8a4a; opacity: .85; white-space: nowrap; }
.wm1 { font: 17px/22px "Noto Sans CJK SC", sans-serif; }
.wm2 { font: 15px/16px "Liberation Serif", serif; }
```
